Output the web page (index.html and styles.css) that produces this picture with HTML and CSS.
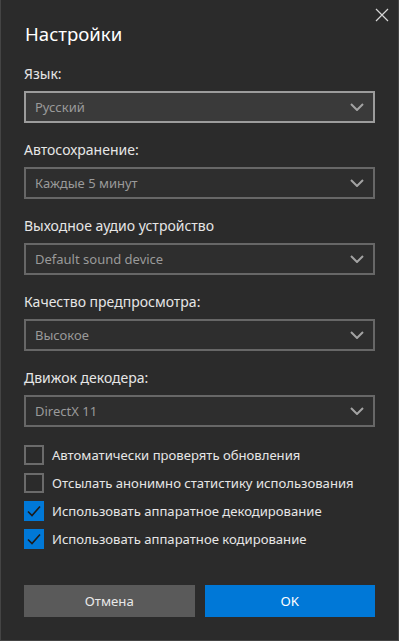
FILE: index.html
```html
<!DOCTYPE html>
<html lang="ru">
<head>
    <meta charset="UTF-8">
    <meta name="viewport" content="width=device-width, initial-scale=1.0">
    <title>Настройки</title>
    <link rel="stylesheet" href="styles.css">
</head>
<body>
    <div class="dialog">
        <div class="header">
            <h1>Настройки</h1>
            <button class="close-btn" title="Закрыть">
                <svg width="14" height="14" viewBox="0 0 14 14"><path d="M1 1L13 13M13 1L1 13" stroke="#d6d6d6" stroke-width="1.2" fill="none"/></svg>
            </button>
        </div>

        <div class="field">
            <label>Язык:</label>
            <div class="select active"><span>Русский</span><svg class="chevron" width="14" height="8" viewBox="0 0 14 8"><path d="M1 1L7 7L13 1" stroke="currentColor" stroke-width="2" fill="none"/></svg></div>
        </div>
        <div class="field">
            <label>Автосохранение:</label>
            <div class="select"><span>Каждые 5 минут</span><svg class="chevron" width="14" height="8" viewBox="0 0 14 8"><path d="M1 1L7 7L13 1" stroke="currentColor" stroke-width="2" fill="none"/></svg></div>
        </div>
        <div class="field">
            <label>Выходное аудио устройство</label>
            <div class="select"><span>Default sound device</span><svg class="chevron" width="14" height="8" viewBox="0 0 14 8"><path d="M1 1L7 7L13 1" stroke="currentColor" stroke-width="2" fill="none"/></svg></div>
        </div>
        <div class="field">
            <label>Качество предпросмотра:</label>
            <div class="select"><span>Высокое</span><svg class="chevron" width="14" height="8" viewBox="0 0 14 8"><path d="M1 1L7 7L13 1" stroke="currentColor" stroke-width="2" fill="none"/></svg></div>
        </div>
        <div class="field">
            <label>Движок декодера:</label>
            <div class="select"><span>DirectX 11</span><svg class="chevron" width="14" height="8" viewBox="0 0 14 8"><path d="M1 1L7 7L13 1" stroke="currentColor" stroke-width="2" fill="none"/></svg></div>
        </div>

        <div class="checks">
            <div class="check"><span class="box"></span>Автоматически проверять обновления</div>
            <div class="check"><span class="box"></span>Отсылать анонимно статистику использования</div>
            <div class="check"><span class="box checked"><svg width="20" height="20" viewBox="0 0 20 20"><path d="M4 10.5L8 14.5L16 5.5" stroke="#1c1c1c" stroke-width="1.6" fill="none"/></svg></span>Использовать аппаратное декодирование</div>
            <div class="check"><span class="box checked"><svg width="20" height="20" viewBox="0 0 20 20"><path d="M4 10.5L8 14.5L16 5.5" stroke="#1c1c1c" stroke-width="1.6" fill="none"/></svg></span>Использовать аппаратное кодирование</div>
        </div>

        <div class="buttons">
            <button class="btn cancel">Отмена</button>
            <button class="btn ok">OK</button>
        </div>
    </div>
</body>
</html>
```

FILE: styles.css
```css
body {
    margin: 0;
    background-color: #2b2b2b;
    font-family: "Noto Sans", "Open Sans", sans-serif;
    color: #e6e6e6;
}

.dialog {
    box-sizing: border-box;
    width: 399px;
    height: 641px;
    padding: 0 23px;
    border: 1px solid #444444;
    border-top: none;
    background-color: #2b2b2b;
}

.header {
    display: flex;
    justify-content: space-between;
    align-items: flex-start;
    padding-top: 8px;
}

.header h1 {
    margin: 13px 0 0 1px;
    font-size: 18.6px;
    font-weight: normal;
    line-height: 26px;
    color: #ffffff;
}

.close-btn {
    margin: 0 -14px 0 0;
    padding: 0;
    width: 14px;
    height: 14px;
    border: none;
    background: none;
    cursor: pointer;
}

.close-btn svg {
    display: block;
}

.field {
    margin-top: 17px;
}

.field:first-of-type {
    margin-top: 14px;
}

.field label {
    display: block;
    font-size: 14px;
    line-height: 20px;
    margin-bottom: 7px;
}

.select {
    box-sizing: border-box;
    height: 32px;
    display: flex;
    align-items: center;
    justify-content: space-between;
    padding: 0 9px;
    border: 2px solid #676767;
    background-color: #2e2e2e;
    color: #9a9a9a;
    font-size: 13px;
}

.select.active {
    border-color: #9c9c9c;
    background-color: #3a3a3a;
}

.chevron {
    color: #a3a3a3;
    display: block;
}

.checks {
    margin-top: 18px;
    display: flex;
    flex-direction: column;
    gap: 8px;
}

.check {
    display: flex;
    align-items: center;
    gap: 8px;
    font-size: 13.1px;
    height: 20px;
    white-space: nowrap;
}

.box {
    box-sizing: border-box;
    width: 20px;
    height: 20px;
    border: 2px solid #6b6b6b;
    flex-shrink: 0;
}

.box.checked {
    border: none;
    background-color: #0078d7;
}

.box svg {
    display: block;
}

.buttons {
    margin-top: 36px;
    display: flex;
    gap: 10px;
}

.btn {
    flex: 1;
    height: 32px;
    border: none;
    font-family: inherit;
    font-size: 13.2px;
    color: #ffffff;
    cursor: pointer;
}

.btn.cancel {
    background-color: #5a5a5a;
    color: #e8e8e8;
}

.btn.ok {
    background-color: #0078d7;
}
```
